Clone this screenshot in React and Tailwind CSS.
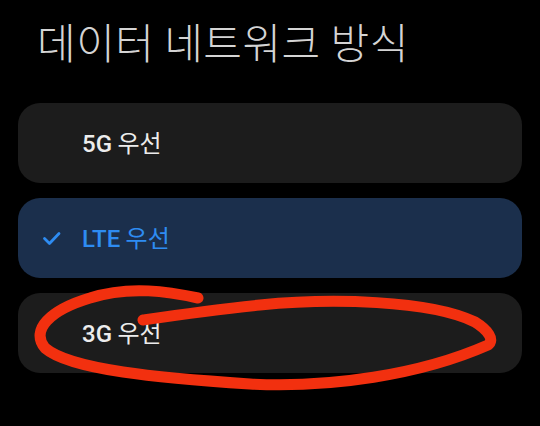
import React from "react";

function Option({ latin, kr, selected }) {
  return (
    <div
      className={`h-[80px] rounded-[22px] flex items-center ${
        selected ? "bg-[#1b2f4c]" : "bg-[#1c1c1c]"
      }`}
    >
      <div className="w-[64px] pl-[24px] flex items-center">
        {selected && (
          <svg width="20" height="20" viewBox="0 0 20 20">
            <path d="M2.5 10.5 L7.5 15.5 L17 5.5" fill="none" stroke="#2e8cf2" strokeWidth="2.8" strokeLinecap="round" strokeLinejoin="round" />
          </svg>
        )}
      </div>
      <span className={`text-[24px] ${selected ? "text-[#2e8cf2]" : "text-[#ececec]"}`}>
        <span className="font-medium" style={{ fontFamily: '"Roboto", sans-serif' }}>{latin}</span>
        <span className="font-normal" style={{ fontFamily: '"Noto Sans CJK KR", sans-serif' }}>{" " + kr}</span>
      </span>
    </div>
  );
}

export default function App() {
  return (
    <div className="w-[540px] h-[426px] bg-black relative overflow-hidden">
      <div className="pl-[37px] pt-[13px] h-[103px]">
        <h1
          className="text-[42px] font-light text-[#d4d4d4] leading-[56px] tracking-[0.5px]"
          style={{ fontFamily: '"Noto Sans CJK KR", sans-serif' }}
        >
          데이터 네트워크 방식
        </h1>
      </div>
      <div className="mx-[18px] flex flex-col gap-[15px]">
        <Option latin="5G" kr="우선" />
        <Option latin="LTE" kr="우선" selected />
        <Option latin="3G" kr="우선" />
      </div>
      <svg className="absolute inset-0 pointer-events-none" width="540" height="426" viewBox="0 0 540 426">
        <path
          d="M198 298 C170 292, 130 285, 90 298 C50 310, 30 330, 45 348 C70 370, 160 378, 250 384 C330 388, 420 375, 488 345 C495 340, 488 330, 475 322 C430 300, 330 298, 260 305 C210 310, 170 316, 143 320"
          fill="none"
          stroke="#f2300f"
          strokeWidth="11"
          strokeLinecap="round"
          strokeLinejoin="round"
        />
      </svg>
    </div>
  );
}
